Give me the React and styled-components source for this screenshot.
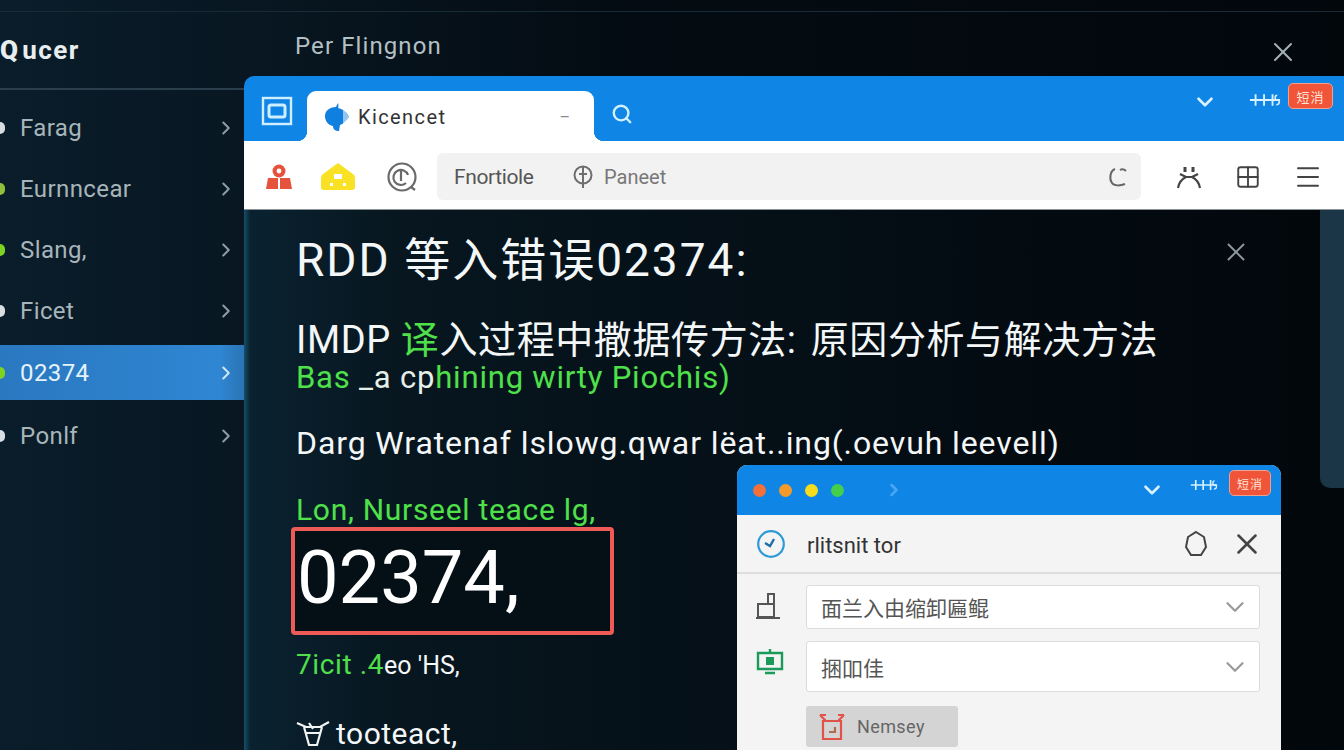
import React from 'react';
import styled, { createGlobalStyle } from 'styled-components';
import { ChevronDown, ChevronRight, Grid2x2, Menu, Search, X } from 'lucide-react';

const sideItems = [
  { label: 'Farag', bullet: '#d7dde0' },
  { label: 'Eurnncear', bullet: '#8fc23a' },
  { label: 'Slang,', bullet: '#7ed321' },
  { label: 'Ficet', bullet: '#d7dde0' },
  { label: '02374', bullet: '#7ed321', active: true },
  { label: 'Ponlf', bullet: '#d7dde0' },
];

const TuneGlyph = ({ width }) => (
  <svg width={width} height="16" viewBox="0 0 34 16" fill="none" stroke="#d8f2ff" strokeWidth="2">
    <path d="M1 8h32M7 2v12M16 2v12M25 2v12" />
    <path d="M30 3c-3 0-3 5 0 5s3 5-1 5" strokeWidth="1.6" />
  </svg>
);

const ChromeRight = ({ small }) => (
  <ChromeTools $small={small}>
    <ChromeChevron $small={small}>
      <ChevronDown size={26} color="#d8f2ff" strokeWidth={2.4} />
    </ChromeChevron>
    <TuneSlot $small={small}><TuneGlyph width={small ? 28 : 32} /></TuneSlot>
    <Badge $small={small}>短消</Badge>
  </ChromeTools>
);

const App = () => (
  <Page>
    <GlobalStyle />
    <TopStrip />
    <Shell>
      <Sidebar>
        <Brand>
          <BrandMark>Q</BrandMark>
          <span>ucer</span>
        </Brand>
        <SideList>
          {sideItems.map((item) => (
            <SideRow key={item.label} $active={item.active}>
              <Bullet $color={item.bullet} />
              <SideLabel $active={item.active}>{item.label}</SideLabel>
              <ChevronRight size={22} color={item.active ? '#cfe6f5' : '#8d9da5'} strokeWidth={2.2} />
            </SideRow>
          ))}
        </SideList>
      </Sidebar>

      <Main>
        <MainHeader>
          <MainTitle>Per Flingnon</MainTitle>
          <HeaderClose><X size={32} color="#a4b0b4" strokeWidth={1.5} /></HeaderClose>
        </MainHeader>

        <Browser>
          <TabBar>
            <WindowIcon>
              <svg width="32" height="30" viewBox="0 0 32 30" fill="none" stroke="#cfeeff">
                <rect x="2" y="2" width="28" height="26" strokeWidth="2.4" />
                <rect x="8" y="9" width="16" height="12" rx="2" strokeWidth="3" />
              </svg>
            </WindowIcon>
            <Tab>
              <svg width="26" height="30" viewBox="0 0 26 30">
                <path d="M14 1c1 3 0 5 0 5 5 1 9 4 11 9-3 4-6 7-9 8l-1 6c-4 0-6-2-6-5-5-1-8-5-8-10 0-6 6-9 11-9z" fill="#0f7fe0" />
                <path d="M19 6l6 9-6 8z" fill="#ffffff" opacity=".55" />
              </svg>
              <TabLabel>Kicencet</TabLabel>
              <TabClose>–</TabClose>
            </Tab>
            <TabSearch><Search size={22} color="#d4f0ff" strokeWidth={2.6} /></TabSearch>
            <ChromeRight />
          </TabBar>

          <Toolbar>
            <ToolIcons>
              <svg width="28" height="28" viewBox="0 0 28 28" fill="#e5533d">
                <circle cx="14" cy="8" r="6.5" />
                <circle cx="14" cy="8" r="2.4" fill="#fff" />
                <path d="M1 26l2-11h10v11zM15 26V15h10l2 11z" />
              </svg>
              <svg width="34" height="28" viewBox="0 0 34 28">
                <path d="M17 0l15 11q2 1 2 4v9q0 3-3 3H3q-3 0-3-3v-9q0-3 2-4z" fill="#f9e225" />
                <path d="M13 11h8v5h-8zM9 20h3v3H9zM22 20h3v3h-3z" fill="#fff" />
              </svg>
              <GreyRing width="32" height="32" viewBox="0 0 32 32" fill="none" stroke="#6a6a6a" strokeWidth="2.2">
                <circle cx="16" cy="16" r="13.5" />
                <path d="M20 22a7.5 7.5 0 1 1 2-8" />
                <path d="M15 10v10M25 26l4 3" />
              </GreyRing>
            </ToolIcons>
            <AddressBar>
              <AddressText>Fnortiole</AddressText>
              <svg width="24" height="24" viewBox="0 0 24 24" fill="none" stroke="#6e6e6e" strokeWidth="2">
                <circle cx="12" cy="10" r="8.5" />
                <path d="M12 2v21M8 9h8" />
              </svg>
              <AddressHint>Paneet</AddressHint>
              <RefreshSlot>
                <svg width="22" height="22" viewBox="0 0 22 22" fill="none" stroke="#666" strokeWidth="2">
                  <path d="M8 3C3 5 2 13 5 17c2 3 8 3 13 1" />
                  <path d="M13 4q3-2 6 1" />
                </svg>
              </RefreshSlot>
            </AddressBar>
            <ToolActions>
              <svg width="26" height="26" viewBox="0 0 26 26" fill="none" stroke="#444" strokeWidth="2.2">
                <path d="M2 24c1-6 4-9 8-11h6c4 2 7 5 8 11M4 10l6 3M22 10l-6 3" />
                <path d="M9 3v5M17 3v5" strokeWidth="3" />
              </svg>
              <Grid2x2 size={26} color="#444" strokeWidth={1.9} absoluteStrokeWidth />
              <Menu size={30} color="#444" strokeWidth={2} absoluteStrokeWidth />
            </ToolActions>
          </Toolbar>

          <Article>
            <ArticleClose><X size={30} color="#8f9a9f" strokeWidth={1.5} /></ArticleClose>
            <Scrollbar />
            <Heading>RDD 等入错误02374:</Heading>
            <SubHeading>IMDP <Green>译</Green>入过程中撒据传方法:<Wide />原因分析与解决方法</SubHeading>
            <GreenLine><Green>Bas</Green> _a cp<Green>hining wirty Piochis)</Green></GreenLine>
            <BodyLine>Darg Wratenaf lslowg.qwar lëat..ing(.oevuh leevell)</BodyLine>
            <NoteLine><Green>Lon, Nurseel teace lg,</Green></NoteLine>
            <CodeBox>02374,</CodeBox>
            <HintLine><Green>7icit .4</Green><HintTail>eo &apos;HS,</HintTail></HintLine>
            <FootLine>
              <svg width="34" height="30" viewBox="0 0 34 30" fill="none" stroke="#f0f3f4" strokeWidth="2.2">
                <path d="M1 4l9 4h14l9-5M8 8l5 18h8l5-18M13 4l4 6M10 14h14" />
              </svg>
              tooteact,
            </FootLine>

            <FloatWindow>
              <FloatBar>
                <Dot $color="#f2713a" />
                <Dot $color="#f39a2b" />
                <Dot $color="#f7dc1e" />
                <Dot $color="#43cf4c" />
                <FloatChevron><ChevronRight size={20} color="#4aa6f2" strokeWidth={3} /></FloatChevron>
                <ChromeRight small />
              </FloatBar>
              <FloatHead>
                <svg width="30" height="30" viewBox="0 0 30 30" fill="none">
                  <circle cx="15" cy="15" r="12.8" stroke="#2d9ad8" strokeWidth="2.2" />
                  <path d="M9 14l5 3 4-7" stroke="#1c6fa8" strokeWidth="2.4" />
                </svg>
                <FloatTitle>rlitsnit tor</FloatTitle>
                <HexIcon width="26" height="28" viewBox="0 0 26 28" fill="none" stroke="#444" strokeWidth="2">
                  <path d="M13 2l8 5 2 10-5 8H8l-5-8 2-10z" />
                </HexIcon>
                <X size={34} color="#444" strokeWidth={1.8} />
              </FloatHead>
              <FloatBody>
                <FieldRow>
                  <FieldIcon>
                    <svg width="26" height="30" viewBox="0 0 26 30" fill="none" stroke="#555" strokeWidth="2">
                      <path d="M2 26V13h16v13zM18 13V3h-6v10M0 27h24" />
                    </svg>
                  </FieldIcon>
                  <Select $height={44}>
                    <SelectText>面兰入由缩卸匾鲲</SelectText>
                    <ChevronDown size={30} color="#9a9a9a" strokeWidth={1.8} />
                  </Select>
                </FieldRow>
                <FieldRow>
                  <FieldIcon>
                    <svg width="28" height="28" viewBox="0 0 28 28" fill="none" stroke="#1c9a5a" strokeWidth="2.4">
                      <path d="M2 6h24v16H2zM9 26h10M14 2v4" />
                      <rect x="10" y="10" width="8" height="8" fill="#1c9a5a" stroke="none" />
                    </svg>
                  </FieldIcon>
                  <Select $height={51}>
                    <SelectText>捆吅佳</SelectText>
                    <ChevronDown size={30} color="#9a9a9a" strokeWidth={1.8} />
                  </Select>
                </FieldRow>
                <ActionButton>
                  <svg width="26" height="28" viewBox="0 0 26 28" fill="none" stroke="#e0524a" strokeWidth="2.2">
                    <path d="M4 8h18v18H4zM1 2l6 6M25 2l-6 6M1 2h6M25 2h-6" />
                    <path d="M10 19h6v-5" stroke="#b06a50" />
                  </svg>
                  <span>Nemsey</span>
                </ActionButton>
              </FloatBody>
            </FloatWindow>
          </Article>
        </Browser>
      </Main>
    </Shell>
  </Page>
);

const GlobalStyle = createGlobalStyle`
  html, body {
    margin: 0;
    height: 100%;
    background: #050d14;
  }
  * {
    box-sizing: border-box;
  }
  body {
    font-family: Roboto, "Noto Sans CJK SC", sans-serif;
  }
`;

const Page = styled.div`
  display: flex;
  flex-direction: column;
  height: 100vh;
  overflow: hidden;
  background: linear-gradient(90deg, #0a1d2a 0%, #081722 18%, #040c13 45%, #02070c 100%);
`;

const TopStrip = styled.div`
  height: 12px;
  flex: none;
  border-bottom: 1px solid #182b37;
`;

const Shell = styled.div`
  flex: 1;
  min-height: 0;
  display: grid;
  grid-template-columns: 244px 1fr;
`;

const Sidebar = styled.aside`
  display: flex;
  flex-direction: column;
  min-width: 0;
`;

const Brand = styled.div`
  height: 78px;
  flex: none;
  display: flex;
  align-items: center;
  gap: 3px;
  border-bottom: 2px solid #2a3f4b;
  color: #e8edef;
  font-size: 26px;
  font-weight: 700;
  letter-spacing: 1.4px;
`;

const BrandMark = styled.span`
  font-size: 26px;
  font-weight: 900;
`;

const SideList = styled.nav`
  display: flex;
  flex-direction: column;
  margin-top: 7px;
`;

const SideRow = styled.div`
  display: flex;
  align-items: center;
  height: ${(p) => (p.$active ? '55px' : '61px')};
  margin: ${(p) => (p.$active ? '4px 0 5px' : '0')};
  padding-right: 7px;
  background: ${(p) => (p.$active ? 'linear-gradient(90deg, #2a78c0, #2f86d2 90%, #2a74b4)' : 'transparent')};
`;

const Bullet = styled.span`
  width: 5px;
  height: 12px;
  flex: none;
  border-radius: 0 5px 5px 0;
  background: ${(p) => p.$color};
`;

const SideLabel = styled.span`
  flex: 1;
  margin-left: 15px;
  font-size: 24px;
  letter-spacing: 0.4px;
  color: ${(p) => (p.$active ? '#e4f3fb' : '#a7b5ba')};
`;

const Main = styled.main`
  display: flex;
  flex-direction: column;
  min-width: 0;
  min-height: 0;
`;

const MainHeader = styled.header`
  height: 64px;
  flex: none;
  display: flex;
  justify-content: space-between;
  align-items: flex-start;
  padding: 21px 45px 0 51px;
`;

const MainTitle = styled.h1`
  margin: 0;
  font-size: 24px;
  line-height: 26px;
  font-weight: 400;
  letter-spacing: 1.1px;
  color: #b3c0c4;
`;

const HeaderClose = styled.span`
  display: flex;
  margin-top: 3px;
`;

const Browser = styled.section`
  flex: 1;
  min-height: 0;
  display: flex;
  flex-direction: column;
  border-radius: 10px 0 0 0;
  overflow: hidden;
`;

const TabBar = styled.div`
  height: 65px;
  flex: none;
  display: flex;
  align-items: flex-end;
  background: #0f86e6;
`;

const WindowIcon = styled.span`
  width: 63px;
  height: 50px;
  flex: none;
  display: flex;
  justify-content: center;
  align-items: flex-start;
  padding: 5px 0 0 2px;
`;

const Tab = styled.div`
  position: relative;
  width: 287px;
  height: 50px;
  flex: none;
  display: flex;
  align-items: center;
  padding: 2px 24px 0 17px;
  background: #fff;
  border-radius: 9px 9px 0 0;

  &::before,
  &::after {
    content: '';
    position: absolute;
    bottom: 0;
    width: 10px;
    height: 10px;
  }
  &::before {
    left: -10px;
    background: radial-gradient(circle at 0 0, #0f86e6 10px, #fff 10.5px);
  }
  &::after {
    right: -10px;
    background: radial-gradient(circle at 100% 0, #0f86e6 10px, #fff 10.5px);
  }
`;

const TabLabel = styled.span`
  flex: 1;
  margin-left: 8px;
  font-size: 20px;
  letter-spacing: 1.4px;
  color: #333;
`;

const TabClose = styled.span`
  font-size: 16px;
  color: #888;
`;

const TabSearch = styled.span`
  display: flex;
  align-self: center;
  margin: 10px 0 0 17px;
`;

const ChromeTools = styled.div`
  margin-left: auto;
  align-self: flex-start;
  display: flex;
  align-items: flex-start;
  padding: ${(p) => (p.$small ? '5px 10px 0 0' : '7px 11px 0 0')};
`;

const ChromeChevron = styled.span`
  display: flex;
  margin-top: ${(p) => (p.$small ? '7px' : '6px')};
`;

const TuneSlot = styled.span`
  display: flex;
  margin: ${(p) => (p.$small ? '7px 11px 0 25px' : '9px 7px 0 31px')};
`;

const Badge = styled.span`
  display: flex;
  justify-content: center;
  align-items: center;
  width: ${(p) => (p.$small ? '42px' : '45px')};
  height: 26px;
  border-radius: 5px;
  border: 1px solid #f0a08e;
  background: #f0553a;
  color: #ffe3d8;
  font-size: ${(p) => (p.$small ? '12px' : '13px')};
  letter-spacing: 1px;
`;

const Toolbar = styled.div`
  height: 69px;
  flex: none;
  display: flex;
  align-items: center;
  padding-top: 3px;
  background: #fff;
  border-bottom: 1px solid #8c9499;
`;

const ToolIcons = styled.div`
  width: 193px;
  flex: none;
  display: flex;
  align-items: center;
  gap: 28px;
  padding-left: 21px;
`;

const GreyRing = styled.svg`
  margin-left: 3px;
`;

const AddressBar = styled.div`
  width: 704px;
  height: 47px;
  flex: none;
  display: flex;
  align-items: center;
  padding: 0 12px 0 17px;
  border-radius: 6px;
  background: #f2f2f2;
`;

const AddressText = styled.span`
  width: 117px;
  font-size: 21px;
  color: #555;
  letter-spacing: -0.4px;
`;

const AddressHint = styled.span`
  margin-left: 9px;
  font-size: 20px;
  color: #777;
`;

const RefreshSlot = styled.span`
  display: flex;
  margin-left: auto;
`;

const ToolActions = styled.div`
  flex: 1;
  display: flex;
  align-items: center;
  justify-content: space-between;
  padding: 0 21px 0 35px;
`;

const Article = styled.article`
  position: relative;
  flex: 1;
  min-height: 0;
  padding: 25px 0 0 52px;
  color: #f4f7f8;
  background:
    radial-gradient(circle at 1284px 60px, #1c2f3a 1px, transparent 2px),
    linear-gradient(90deg, #14506a 0, #0a2230 6px, #07161f 14%, #040d14 60%, #02070b 100%);
`;

const ArticleClose = styled.span`
  position: absolute;
  top: 27px;
  right: 93px;
  display: flex;
`;

const Scrollbar = styled.div`
  position: absolute;
  top: 0;
  right: 0;
  width: 24px;
  height: 278px;
  border-radius: 0 0 0 10px;
  background: #1b3646;
`;

const Green = styled.span`
  color: #4fe04a;
`;

const Wide = styled.span`
  display: inline-block;
  width: 14px;
`;

const Heading = styled.h2`
  margin: 0;
  font-size: 46px;
  line-height: 50px;
  font-weight: 400;
  letter-spacing: 2px;
`;

const SubHeading = styled.h3`
  margin: 33px 0 0;
  font-size: 38px;
  line-height: 44px;
  font-weight: 400;
  letter-spacing: 0.6px;
  white-space: nowrap;
`;

const GreenLine = styled.p`
  margin: 0;
  font-size: 31px;
  line-height: 32px;
  letter-spacing: 0.8px;
  color: #e6efe8;
`;

const BodyLine = styled.p`
  margin: 31px 0 0;
  font-size: 32px;
  line-height: 36px;
  letter-spacing: 0.9px;
  white-space: nowrap;
`;

const NoteLine = styled.p`
  margin: 32px 0 0;
  font-size: 30px;
  line-height: 34px;
  letter-spacing: 0.7px;
`;

const CodeBox = styled.div`
  display: flex;
  align-items: center;
  width: 323px;
  height: 108px;
  margin-left: -5px;
  padding: 0 0 8px 2px;
  border: 4px solid #ee5a55;
  border-radius: 4px;
  background: #050f16;
  font-size: 74px;
  color: #fff;
`;

const HintLine = styled.p`
  margin: 13px 0 0;
  font-size: 28px;
  line-height: 34px;
  letter-spacing: 0.6px;
`;

const HintTail = styled.span`
  font-size: 25px;
  letter-spacing: 0;
`;

const FootLine = styled.p`
  display: flex;
  align-items: center;
  gap: 6px;
  margin: 33px 0 0;
  font-size: 30px;
  line-height: 36px;
  letter-spacing: 0.5px;
`;

const FloatWindow = styled.div`
  position: absolute;
  top: 255px;
  left: 493px;
  width: 544px;
  height: 300px;
  border-radius: 10px 10px 0 0;
  overflow: hidden;
  background: #f4f4f5;
`;

const FloatBar = styled.div`
  height: 50px;
  display: flex;
  align-items: center;
  gap: 13px;
  padding-left: 16px;
  background: #0f86e6;
`;

const Dot = styled.span`
  width: 13px;
  height: 13px;
  border-radius: 50%;
  background: ${(p) => p.$color};
`;

const FloatChevron = styled.span`
  display: flex;
  margin-left: 27px;
`;

const FloatHead = styled.div`
  height: 59px;
  display: flex;
  align-items: center;
  gap: 16px;
  padding: 0 17px 0 19px;
  border-bottom: 2px solid #dedede;
  color: #333;
`;

const FloatTitle = styled.span`
  flex: 1;
  margin-left: 5px;
  margin-top: 3px;
  font-size: 22px;
`;

const HexIcon = styled.svg`
  margin-right: 5px;
`;

const FloatBody = styled.div`
  display: flex;
  flex-direction: column;
  gap: 12px;
  padding: 11px 21px 0 69px;
`;

const FieldRow = styled.div`
  position: relative;
`;

const FieldIcon = styled.span`
  position: absolute;
  left: -50px;
  top: 6px;
  display: flex;
`;

const Select = styled.div`
  height: ${(p) => p.$height}px;
  display: flex;
  align-items: center;
  justify-content: space-between;
  padding: 0 9px 0 14px;
  background: #fff;
  border: 1px solid #dcdcdc;
  border-radius: 3px;
`;

const SelectText = styled.span`
  font-size: 21px;
  color: #555;
`;

const ActionButton = styled.div`
  width: 152px;
  height: 41px;
  margin-top: 2px;
  display: flex;
  align-items: center;
  gap: 12px;
  padding-left: 13px;
  border-radius: 3px;
  background: #d4d4d4;
  font-size: 18px;
  letter-spacing: 0.4px;
  color: #666;
`;

export default App;
